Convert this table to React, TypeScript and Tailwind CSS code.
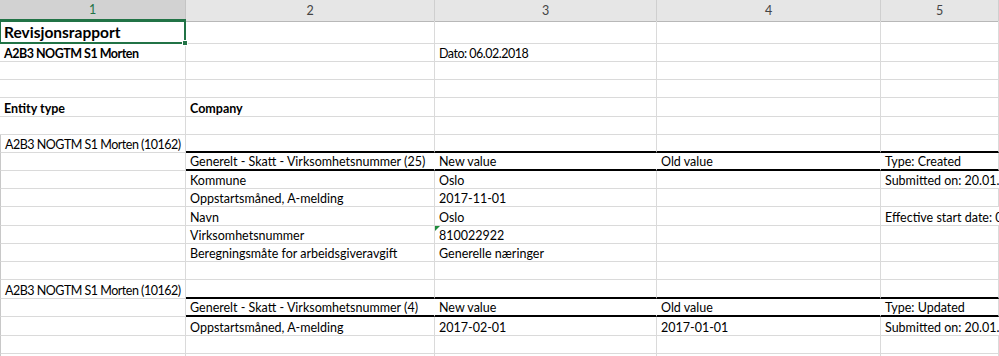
import React from "react";

type Cell = {
  text?: string;
  bold?: boolean;
  title?: boolean;
  flag?: boolean;
  tight?: boolean;
};

type Row = {
  h: number;
  cells: Cell[];
  // medium black rule under columns 2-5
  thick?: boolean;
  // white-filled band: no inner gridlines
  band?: boolean;
  edge?: boolean;
};

const COLS = "grid-cols-[186px_249px_222px_224px_1fr]";

const c = (text?: string, extra: Partial<Cell> = {}): Cell => ({ text, ...extra });
const empty = (): Cell[] => [c(), c(), c(), c(), c()];

const rows: Row[] = [
  { h: 23, cells: [c("Revisjonsrapport", { title: true }), c(), c(), c(), c()] },
  {
    h: 18,
    cells: [c("A2B3 NOGTM S1 Morten", { bold: true, tight: true }), c(), c("Dato: 06.02.2018", { tight: true }), c(), c()],
  },
  { h: 18, cells: empty() },
  { h: 18, cells: empty() },
  { h: 19, cells: [c("Entity type", { bold: true }), c("Company", { bold: true }), c(), c(), c()] },
  { h: 18, cells: empty() },
  { h: 18, thick: true, edge: true, cells: [c("A2B3 NOGTM S1 Morten (10162)", { tight: true }), c(), c(), c(), c()] },
  {
    h: 18,
    thick: true,
    band: true,
    edge: true,
    cells: [c(), c("Generelt - Skatt - Virksomhetsnummer (25)"), c("New value"), c("Old value"), c("Type: Created")],
  },
  { h: 18, edge: true, cells: [c(), c("Kommune"), c("Oslo"), c(), c("Submitted on: 20.01.2018")] },
  { h: 18, edge: true, cells: [c(), c("Oppstartsmåned, A-melding"), c("2017-11-01"), c(), c()] },
  { h: 19, edge: true, cells: [c(), c("Navn"), c("Oslo"), c(), c("Effective start date: 01.11.2017")] },
  { h: 18, edge: true, cells: [c(), c("Virksomhetsnummer"), c("810022922", { flag: true }), c(), c()] },
  { h: 18, edge: true, cells: [c(), c("Beregningsmåte for arbeidsgiveravgift"), c("Generelle næringer"), c(), c()] },
  { h: 18, edge: true, cells: empty() },
  { h: 19, thick: true, edge: true, cells: [c("A2B3 NOGTM S1 Morten (10162)", { tight: true }), c(), c(), c(), c()] },
  {
    h: 18,
    thick: true,
    band: true,
    edge: true,
    cells: [c(), c("Generelt - Skatt - Virksomhetsnummer (4)"), c("New value"), c("Old value"), c("Type: Updated")],
  },
  { h: 19, edge: true, cells: [c(), c("Oppstartsmåned, A-melding"), c("2017-02-01"), c("2017-01-01"), c("Submitted on: 20.01.2018")] },
  { h: 18, edge: true, cells: empty() },
  { h: 18, edge: true, cells: empty() },
];

function ColumnHeader() {
  return (
    <div className={`grid ${COLS} h-[21px] bg-[#e6e6e6] text-[12.5px] text-[#444]`}>
      {["1", "2", "3", "4", "5"].map((n, i) => (
        <div
          key={n}
          className={
            i === 0
              ? "flex items-center justify-center bg-[#d2d2d2] border-r border-[#c4c4c4] border-b-2 border-b-[#217346] text-[#217346] pt-[1px]"
              : "flex items-center justify-center border-r border-[#cfcfcf] border-b border-b-[#b8b8b8] pt-[1px]"
          }
        >
          {n}
        </div>
      ))}
    </div>
  );
}

function SheetCell({ cell, row, col }: { cell: Cell; row: Row; col: number }) {
  const inBand = row.band && col > 0;
  const right = inBand && col < 4 ? "border-r-white" : "border-r-[#dadada]";
  const bottom = row.thick && col > 0 ? "border-b-2 border-b-black" : "border-b border-b-[#dadada]";
  const left = col === 0 && row.edge ? "border-l border-l-[#c8c8c8]" : "";

  let text = "text-[12.5px] text-black";
  if (cell.title) text = "text-[15.5px] font-bold text-black pb-[3px]";
  else if (cell.bold) text = "text-[12.5px] font-bold text-black";
  if (cell.tight) text += " tracking-[-0.5px]";

  return (
    <div className={`relative flex items-end pl-[4px] whitespace-nowrap overflow-visible border-r ${right} ${bottom} ${left} ${text}`}>
      {cell.flag && (
        <span className="absolute left-0 top-0 w-0 h-0 border-t-[5px] border-t-[#1e8b3c] border-r-[5px] border-r-transparent" />
      )}
      {cell.text && <span className="relative z-10 leading-[15px]">{cell.text}</span>}
      {cell.title && (
        <>
          {/* active cell outline and fill handle */}
          <span className="absolute -left-[1px] -top-[2px] right-[-1px] bottom-[-1px] border-2 border-[#217346] pointer-events-none" />
          <span className="absolute right-[-3px] bottom-[-3px] w-[6px] h-[6px] bg-[#217346] border border-white z-20" />
        </>
      )}
    </div>
  );
}

export default function App() {
  return (
    <div className="w-[999px] h-[356px] overflow-hidden bg-white font-['Lato','Liberation_Sans',sans-serif]">
      <ColumnHeader />
      {rows.map((row, r) => (
        <div key={r} className={`grid ${COLS}`} style={{ height: row.h }}>
          {row.cells.map((cell, i) => (
            <SheetCell key={i} cell={cell} row={row} col={i} />
          ))}
        </div>
      ))}
    </div>
  );
}
